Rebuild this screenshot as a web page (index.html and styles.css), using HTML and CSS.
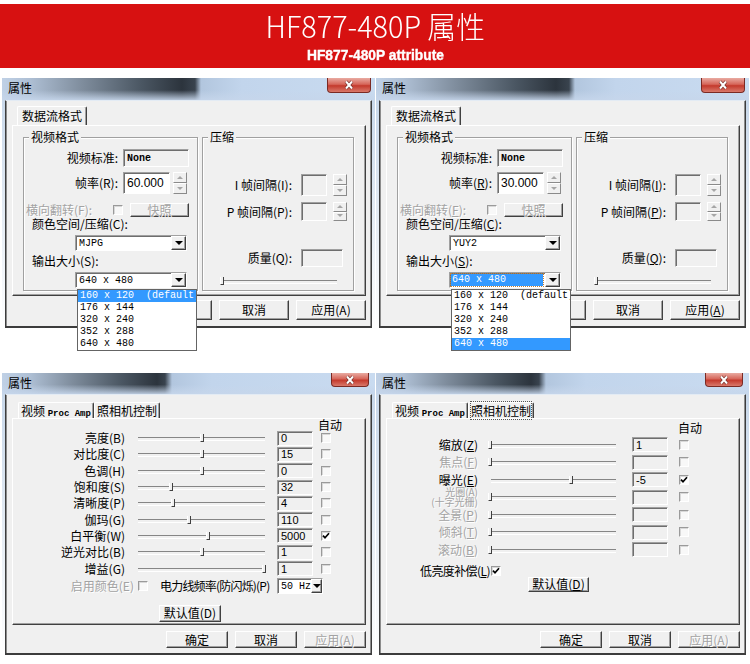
FILE: index.html
```html
<!DOCTYPE html>
<html lang="zh-CN">
<head>
  <meta charset="UTF-8">
  <meta name="viewport" content="width=device-width, initial-scale=1.0">
  <title>HF877-480P 属性</title>
  <link rel="stylesheet" href="styles.css">
</head>
<body>
  <header class="banner">
    <h1><span>HF877-480P 属性</span></h1>
    <p><span>HF877-480P attribute</span></p>
  </header>

  <main class="sheet">
    <!-- stream format, MJPG -->
    <section class="win">
      <div class="titlebar">
        <span class="caption">属性</span>
        <span class="close"><svg viewBox="0 0 12 10" width="12" height="10"><path d="M3 1.5l6 7M9 1.5l-6 7" stroke="#6a2520" stroke-width="3.4"/><path d="M3 1.5l6 7M9 1.5l-6 7" stroke="#fff" stroke-width="2"/></svg></span>
      </div>
      <div class="client">
        <div class="tabs"><span class="tab">数据流格式</span></div>
        <div class="panel stream">
          <fieldset class="group video">
            <legend>视频格式</legend>
            <div class="row v-std"><span class="lbl">视频标准:</span><span class="field mono w66">None</span></div>
            <div class="row v-rate"><span class="lbl">帧率(R):</span><span class="field edit sans w47">60.000</span><span class="spin"><i></i><i class="dn"></i></span></div>
            <div class="row v-flip"><span class="lbl off">横向翻转(F):</span><span class="chk"></span><span class="btn off snap">快照</span></div>
            <div class="row v-note">颜色空间/压缩(C):</div>
            <div class="row v-box"><span class="combo"><span class="val">MJPG</span><span class="arrow"></span></span></div>
            <div class="row v-note">输出大小(S):</div>
            <div class="row v-box">
              <span class="combo"><span class="val">640 x 480</span><span class="arrow"></span>
                <ul class="list">
                  <li class="sel">160 x 120  (default)</li>
                  <li>176 x 144</li>
                  <li>320 x 240</li>
                  <li>352 x 288</li>
                  <li>640 x 480</li>
                </ul>
              </span>
            </div>
          </fieldset>
          <fieldset class="group comp">
            <legend>压缩</legend>
            <div class="row c-i"><span class="lbl">I 帧间隔(I):</span><span class="field w26"></span><span class="spin"><i></i><i class="dn"></i></span></div>
            <div class="row c-p"><span class="lbl">P 帧间隔(P):</span><span class="field w26"></span><span class="spin"><i></i><i class="dn"></i></span></div>
            <div class="row c-q"><span class="lbl">质量(Q):</span><span class="field w42"></span></div>
            <div class="row c-s"><span class="slider"><span class="thumb" style="left:0%"></span></span></div>
          </fieldset>
        </div>
        <div class="buttons">
          <span class="btn">确定</span><span class="btn">取消</span><span class="btn">应用(A)</span>
        </div>
      </div>
    </section>

    <!-- stream format, YUY2 -->
    <section class="win">
      <div class="titlebar">
        <span class="caption">属性</span>
        <span class="close"><svg viewBox="0 0 12 10" width="12" height="10"><path d="M3 1.5l6 7M9 1.5l-6 7" stroke="#6a2520" stroke-width="3.4"/><path d="M3 1.5l6 7M9 1.5l-6 7" stroke="#fff" stroke-width="2"/></svg></span>
      </div>
      <div class="client">
        <div class="tabs"><span class="tab">数据流格式</span></div>
        <div class="panel stream">
          <fieldset class="group video">
            <legend>视频格式</legend>
            <div class="row v-std"><span class="lbl">视频标准:</span><span class="field mono w66">None</span></div>
            <div class="row v-rate"><span class="lbl">帧率(<u>R</u>):</span><span class="field edit sans w47">30.000</span><span class="spin"><i></i><i class="dn"></i></span></div>
            <div class="row v-flip"><span class="lbl off">横向翻转(<u>F</u>):</span><span class="chk"></span><span class="btn off snap">快照</span></div>
            <div class="row v-note">颜色空间/压缩(<u>C</u>):</div>
            <div class="row v-box"><span class="combo"><span class="val">YUY2</span><span class="arrow"></span></span></div>
            <div class="row v-note">输出大小(<u>S</u>):</div>
            <div class="row v-box">
              <span class="combo"><span class="val hl">640 x 480</span><span class="arrow"></span>
                <ul class="list">
                  <li>160 x 120  (default)</li>
                  <li>176 x 144</li>
                  <li>320 x 240</li>
                  <li>352 x 288</li>
                  <li class="sel">640 x 480</li>
                </ul>
              </span>
            </div>
          </fieldset>
          <fieldset class="group comp">
            <legend>压缩</legend>
            <div class="row c-i"><span class="lbl">I 帧间隔(<u>I</u>):</span><span class="field w26"></span><span class="spin"><i></i><i class="dn"></i></span></div>
            <div class="row c-p"><span class="lbl">P 帧间隔(<u>P</u>):</span><span class="field w26"></span><span class="spin"><i></i><i class="dn"></i></span></div>
            <div class="row c-q"><span class="lbl">质量(<u>Q</u>):</span><span class="field w42"></span></div>
            <div class="row c-s"><span class="slider"><span class="thumb" style="left:0%"></span></span></div>
          </fieldset>
        </div>
        <div class="buttons">
          <span class="btn">确定</span><span class="btn">取消</span><span class="btn">应用(<u>A</u>)</span>
        </div>
      </div>
    </section>

    <!-- video proc amp -->
    <section class="win tall">
      <div class="titlebar">
        <span class="caption">属性</span>
        <span class="close"><svg viewBox="0 0 12 10" width="12" height="10"><path d="M3 1.5l6 7M9 1.5l-6 7" stroke="#6a2520" stroke-width="3.4"/><path d="M3 1.5l6 7M9 1.5l-6 7" stroke="#fff" stroke-width="2"/></svg></span>
      </div>
      <div class="client">
        <div class="tabs"><span class="tab">视频 <b>Proc Amp</b></span><span class="tab">照相机控制</span></div>
        <div class="panel amp">
          <div class="auto">自动</div>
          <div class="row ctl"><span class="lbl">亮度(B)</span><span class="slider"><span class="thumb" style="left:51%"></span></span><span class="field">0</span><span class="chk"></span></div>
          <div class="row ctl"><span class="lbl">对比度(C)</span><span class="slider"><span class="thumb" style="left:51%"></span></span><span class="field">15</span><span class="chk"></span></div>
          <div class="row ctl"><span class="lbl">色调(H)</span><span class="slider"><span class="thumb" style="left:51%"></span></span><span class="field">0</span><span class="chk"></span></div>
          <div class="row ctl"><span class="lbl">饱和度(S)</span><span class="slider"><span class="thumb" style="left:27%"></span></span><span class="field">32</span><span class="chk"></span></div>
          <div class="row ctl"><span class="lbl">清晰度(P)</span><span class="slider"><span class="thumb" style="left:28%"></span></span><span class="field">4</span><span class="chk"></span></div>
          <div class="row ctl"><span class="lbl">伽玛(G)</span><span class="slider"><span class="thumb" style="left:41%"></span></span><span class="field">110</span><span class="chk"></span></div>
          <div class="row ctl"><span class="lbl">白平衡(W)</span><span class="slider"><span class="thumb" style="left:56%"></span></span><span class="field">5000</span><span class="chk on"><svg viewBox="0 0 8 8" width="8" height="8"><path d="M1 3.6l2 2.2 4-4.6" stroke="#000" stroke-width="1.7" fill="none"/></svg></span></div>
          <div class="row ctl"><span class="lbl">逆光对比(B)</span><span class="slider"><span class="thumb" style="left:51%"></span></span><span class="field">1</span><span class="chk"></span></div>
          <div class="row ctl"><span class="lbl">增益(G)</span><span class="slider"><span class="thumb" style="left:100%"></span></span><span class="field">1</span><span class="chk"></span></div>
          <div class="row misc">
            <span class="lbl off">启用颜色(E)</span><span class="chk"></span>
            <span class="power">电力线频率(防闪烁)(P)</span>
            <span class="combo hz"><span class="val">50 Hz</span><span class="arrow"></span></span>
          </div>
          <span class="btn dflt">默认值(D)</span>
        </div>
        <div class="buttons">
          <span class="btn">确定</span><span class="btn">取消</span><span class="btn off">应用(A)</span>
        </div>
      </div>
    </section>

    <!-- camera control -->
    <section class="win tall">
      <div class="titlebar">
        <span class="caption">属性</span>
        <span class="close"><svg viewBox="0 0 12 10" width="12" height="10"><path d="M3 1.5l6 7M9 1.5l-6 7" stroke="#6a2520" stroke-width="3.4"/><path d="M3 1.5l6 7M9 1.5l-6 7" stroke="#fff" stroke-width="2"/></svg></span>
      </div>
      <div class="client">
        <div class="tabs"><span class="tab">视频 <b>Proc Amp</b></span><span class="tab on"><em>照相机控制</em></span></div>
        <div class="panel cam">
          <div class="auto">自动</div>
          <div class="row ctl"><span class="lbl">缩放(<u>Z</u>)</span><span class="slider"><span class="thumb" style="left:0%"></span></span><span class="field">1</span><span class="chk"></span></div>
          <div class="row ctl"><span class="lbl off">焦点(<u>F</u>)</span><span class="slider"><span class="thumb" style="left:0%"></span></span><span class="field"></span><span class="chk"></span></div>
          <div class="row ctl"><span class="lbl">曝光(<u>E</u>)</span><span class="slider"><span class="thumb" style="left:65%"></span></span><span class="field">-5</span><span class="chk on"><svg viewBox="0 0 8 8" width="8" height="8"><path d="M1 3.6l2 2.2 4-4.6" stroke="#000" stroke-width="1.7" fill="none"/></svg></span></div>
          <div class="row ctl"><span class="lbl off two"><span>光圈(A)</span><span>(十字光栅)</span></span><span class="slider"><span class="thumb" style="left:0%"></span></span><span class="field"></span><span class="chk"></span></div>
          <div class="row ctl"><span class="lbl off">全景(<u>P</u>)</span><span class="slider"><span class="thumb" style="left:0%"></span></span><span class="field"></span><span class="chk"></span></div>
          <div class="row ctl"><span class="lbl off">倾斜(<u>T</u>)</span><span class="slider"><span class="thumb" style="left:0%"></span></span><span class="field"></span><span class="chk"></span></div>
          <div class="row ctl"><span class="lbl off">滚动(<u>B</u>)</span><span class="slider"><span class="thumb" style="left:0%"></span></span><span class="field"></span><span class="chk"></span></div>
          <div class="row low"><span class="lbl">低亮度补偿(<u>L</u>)</span><span class="chk on"><svg viewBox="0 0 8 8" width="8" height="8"><path d="M1 3.6l2 2.2 4-4.6" stroke="#000" stroke-width="1.7" fill="none"/></svg></span></div>
          <span class="btn dflt">默认值(<u>D</u>)</span>
        </div>
        <div class="buttons">
          <span class="btn">确定</span><span class="btn">取消</span><span class="btn off">应用(A)</span>
        </div>
      </div>
    </section>
  </main>
</body>
</html>
```

FILE: styles.css
```css
* {
  box-sizing: border-box;
}

body {
  margin: 0;
  width: 750px;
  background: #fff;
  color: #000;
  font-family: "Noto Sans CJK SC", "Liberation Sans", sans-serif;
  font-size: 12px;
  line-height: 12px;
}

u {
  text-decoration-thickness: 1px;
  text-underline-offset: 1px;
}

/* red title band */
.banner {
  margin-top: 4px;
  height: 64px;
  padding-top: 4px;
  background: #d71111;
  color: #fff;
  text-align: center;
}

.banner h1 {
  margin: 0;
  font-size: 30px;
  font-weight: 300;
  line-height: 35px;
}

.banner span {
  display: inline-block;
  white-space: nowrap;
  transform: scaleX(0.96);
}

.banner p {
  margin: 4px 0 0;
  font: bold 15px/16px "Liberation Sans", sans-serif;
}

.banner p span {
  transform: scaleX(0.92);
  -webkit-text-stroke: 0.4px #fff;
}

/* the four dialogs */
.sheet {
  display: grid;
  grid-template-columns: 373px 373px;
  column-gap: 1px;
  row-gap: 43px;
  align-items: start;
  padding: 10px 0 0 2px;
}

.win {
  padding-bottom: 2px;
  background: linear-gradient(#c3d4e8, #dfe8f2 45%, #fff);
}

.titlebar {
  height: 22px;
  display: flex;
  justify-content: space-between;
  align-items: flex-start;
  padding: 0 4px 0 6px;
  background:
    linear-gradient(rgba(198, 214, 235, 0) 55%, rgba(198, 214, 235, 0.9)),
    linear-gradient(90deg, #c0d1e6 0, #aebfd4 28px, #7f8d9d 80px, #4a5662 140px, #2c343d 180px, #39434e 193px, #b2c6de 199px, #c2d5ec 240px, #c9dbf0 100%);
}

.caption {
  line-height: 20px;
}

.close {
  width: 44px;
  height: 15px;
  display: flex;
  align-items: center;
  justify-content: center;
  border: 1px solid #7b2a23;
  border-top: 0;
  border-radius: 0 0 4px 4px;
  background: linear-gradient(#e9aba2, #d6665a 45%, #c43a2d 55%, #d9786a);
}

.tall .titlebar {
  height: 21px;
  background:
    linear-gradient(rgba(198, 214, 235, 0) 55%, rgba(198, 214, 235, 0.9)),
    linear-gradient(90deg, #c0d1e6 0, #aebfd4 28px, #7f8d9d 70px, #4a5662 120px, #2c343d 155px, #39434e 163px, #b2c6de 170px, #c2d5ec 210px, #c9dbf0 100%);
}

.tall .close {
  width: 38px;
  height: 14px;
  margin-right: 2px;
}

.client {
  height: 228px;
  margin: 0 3px;
  display: flex;
  flex-direction: column;
  padding: 0 5px 6px 6px;
  background: #f0f0f0;
  border: 1px solid #3c3c3c;
  border-top-color: #e3ebf4;
  border-bottom-width: 2px;
  box-shadow: inset 1px 0 #8c8c8c, inset -1px 0 #8c8c8c;
}

.tall .client {
  height: 261px;
  padding-bottom: 5px;
}

/* tab strip */
.tabs {
  flex: none;
  display: flex;
  height: 19px;
  margin: 5px 0 0 5px;
}

.tall .tabs {
  height: 16px;
  margin-top: 7px;
  margin-left: 6px;
}

.tab {
  padding: 0 4px;
  line-height: 18px;
  white-space: nowrap;
  border: 1px solid #fff;
  border-bottom: 0;
  border-right-color: #404040;
  border-radius: 2px 2px 0 0;
  box-shadow: inset -1px 0 #a0a0a0;
}

.tall .tab {
  padding: 0 2px;
  line-height: 15px;
}

.tab b {
  font: bold 9px "Liberation Mono", monospace;
}

.tab em {
  font-style: normal;
  outline: 1px dotted #555;
  outline-offset: 0;
}

.panel {
  flex: none;
  position: relative;
  height: 171px;
  border: 1px solid #fff;
  border-right-color: #404040;
  border-bottom-color: #404040;
  box-shadow: inset -1px -1px #a0a0a0;
}

.tall .panel {
  height: 207px;
}

/* dialog buttons */
.buttons {
  flex: none;
  display: flex;
  justify-content: flex-end;
  gap: 7px;
  height: 20px;
  margin: 4px 0 0;
}

.tall .buttons {
  height: 17px;
  margin-top: 6px;
}

.btn {
  flex: none;
  width: 70px;
  display: flex;
  align-items: center;
  justify-content: center;
  white-space: nowrap;
  background: #f0f0f0;
  border: 1px solid;
  border-color: #fff #404040 #404040 #fff;
  box-shadow: inset -1px -1px #a0a0a0;
}

.tall .btn {
  width: 62px;
}

.off {
  color: #a3a3a3;
  text-shadow: 1px 1px #fff;
}

/* common controls */
.row {
  flex: none;
  display: flex;
  align-items: stretch;
  white-space: nowrap;
}

.lbl {
  flex: none;
  display: flex;
  align-items: center;
  justify-content: flex-end;
}

.field {
  flex: none;
  display: flex;
  align-items: center;
  overflow: hidden;
  padding-left: 3px;
  background: #f0f0f0;
  border: 1px solid;
  border-color: #a0a0a0 #fff #fff #a0a0a0;
  box-shadow: inset 1px 1px #6e6e6e;
  font: 11px "Liberation Sans", sans-serif;
}

.field.edit {
  background: #fff;
}

.field.sans {
  font-size: 12px;
}

.mono,
.combo .val,
.list li {
  font-family: "Liberation Mono", monospace;
  font-size: 10px;
}

.field.mono {
  font-weight: bold;
}

.w66 { width: 66px; }
.w47 { width: 47px; }
.w42 { width: 42px; }
.w26 { width: 26px; }

.spin {
  flex: none;
  width: 14px;
  display: flex;
  flex-direction: column;
  margin-left: 3px;
}

.spin i {
  flex: 1;
  position: relative;
  background: #f0f0f0;
  border: 1px solid;
  border-color: #fff #8a8a8a #8a8a8a #fff;
}

.spin i::after {
  content: "";
  position: absolute;
  left: 50%;
  top: 50%;
  margin: -2px 0 0 -3px;
  border: 3px solid transparent;
  border-top: 0;
  border-bottom: 3px solid #a6a6a6;
}

.spin i.dn::after {
  border-bottom: 0;
  border-top: 3px solid #a6a6a6;
}

.chk {
  flex: none;
  align-self: center;
  width: 10px;
  height: 10px;
  display: flex;
  align-items: center;
  justify-content: center;
  background: #f8f8f8;
  border: 1px solid;
  border-color: #9a9a9a #fff #fff #9a9a9a;
  box-shadow: inset 1px 1px #d8d8d8;
}

.chk.on {
  background: #fff;
}

.combo {
  flex: none;
  position: relative;
  display: flex;
  width: 112px;
  height: 16px;
  background: #fff;
  border: 1px solid;
  border-color: #a0a0a0 #fff #fff #a0a0a0;
  box-shadow: inset 1px 1px #6e6e6e;
}

.combo .val {
  flex: 1;
  padding: 1px 0 0 3px;
  line-height: 13px;
}

.combo .val.hl {
  margin: 1px 2px 1px 1px;
  padding: 0 0 0 1px;
  line-height: 12px;
  background: #3399ff;
  color: #fff;
  outline: 1px dotted #c0803a;
}

.combo .arrow {
  position: relative;
  width: 15px;
  background: #f0f0f0;
  border: 1px solid;
  border-color: #fff #404040 #404040 #fff;
  box-shadow: inset -1px -1px #a0a0a0;
}

.combo .arrow::after {
  content: "";
  position: absolute;
  left: 50%;
  top: 50%;
  margin: -2px 0 0 -4px;
  border: 4px solid transparent;
  border-bottom: 0;
  border-top: 4px solid #000;
}

/* open drop-down list of the size combo */
.list {
  position: absolute;
  top: calc(100% + 2px);
  left: 1px;
  z-index: 2;
  width: 120px;
  margin: 0;
  padding: 0;
  list-style: none;
  background: #fff;
  border: 1px solid #646464;
}

.list li {
  height: 12px;
  line-height: 12px;
  padding-left: 2px;
  white-space: pre;
  overflow: hidden;
}

.list li.sel {
  background: #3399ff;
  color: #fff;
}

.slider {
  flex: none;
  position: relative;
  align-self: center;
  height: 10px;
}

.slider::before {
  content: "";
  position: absolute;
  left: 0;
  right: 0;
  top: 4px;
  height: 2px;
  border-top: 1px solid #868686;
  border-bottom: 1px solid #fff;
}

.thumb {
  position: absolute;
  top: 1px;
  width: 4px;
  height: 8px;
  margin-left: -3px;
  background: #f0f0f0;
  border-left: 1px solid #fff;
  border-right: 1px solid #404040;
  border-bottom: 1px solid #404040;
}

/* stream format page */
.stream {
  display: flex;
  gap: 4px;
  padding: 4px 0 0 10px;
}

.group {
  flex: none;
  min-width: 0;
  height: 161px;
  margin: 0;
  padding: 0;
  display: flex;
  flex-direction: column;
  border: 1px solid #a0a0a0;
  box-shadow: inset 1px 1px #fff, 1px 1px #fff;
}

.group legend {
  margin-left: 5px;
  padding: 0 2px;
  line-height: 14px;
  background: #f0f0f0;
}

.video { width: 175px; }
.comp { width: 152px; }

.video .lbl {
  width: 94px;
  margin-right: 5px;
}

.v-std { margin-top: 5px; height: 18px; }
.v-rate { margin-top: 5px; height: 22px; }
.v-flip { margin-top: 9px; height: 14px; }
.v-note { margin-top: 1px; height: 12px; padding-left: 8px; align-items: center; }
.v-box { margin-top: 5px; height: 16px; padding-left: 51px; }
.v-box + .v-note { margin-top: 4px; }

.v-flip .lbl {
  width: 89px;
  margin: 0;
  padding-left: 2px;
  justify-content: flex-start;
}

.v-flip .snap {
  width: 59px;
  margin-left: 7px;
}

.comp .lbl {
  width: 89px;
  margin-right: 9px;
}

.comp .spin {
  margin-left: 6px;
}

.c-i { margin-top: 30px; height: 22px; }
.c-p { margin-top: 6px; height: 19px; }
.c-q { margin-top: 28px; height: 18px; }
.c-s { margin-top: 9px; height: 9px; padding-left: 20px; }
.c-s .slider { width: 114px; }

/* proc amp page */
.amp .auto {
  height: 11px;
  padding-left: 305px;
  line-height: 12px;
}

.amp .ctl { height: 16.3px; }
.amp .ctl .lbl { width: 112px; }
.amp .ctl .slider { width: 127px; margin-left: 13px; }
.amp .ctl .field { width: 36px; height: 15px; align-self: center; margin-left: 12px; }
.amp .ctl .chk { margin-left: 8px; }

.misc {
  margin-top: 1.3px;
  height: 16px;
}

.misc .lbl { width: 121px; }
.misc .chk { margin-left: 4px; }

.power {
  width: 105px;
  margin-left: 12px;
  display: flex;
  align-items: center;
  letter-spacing: -0.8px;
}

.combo.hz {
  width: 46px;
  margin-left: 12px;
}

.combo.hz .arrow {
  width: 14px;
}

.amp .dflt {
  width: 62px;
  height: 17px;
  margin: 11px 0 0 146px;
}

/* camera control page */
.cam .auto {
  height: 17px;
  padding-left: 291px;
  line-height: 18px;
}

.cam .ctl { height: 17.5px; }
.cam .ctl .lbl { width: 91px; }
.cam .ctl .slider { width: 125px; margin-left: 13px; }
.cam .ctl .field { width: 36px; height: 15px; align-self: center; margin-left: 16px; }
.cam .ctl .chk { margin-left: 11px; }

.cam .two {
  flex-direction: column;
  align-items: flex-end;
  justify-content: center;
  font-size: 10px;
  line-height: 10px;
}

.low {
  margin-top: 6.25px;
  height: 12px;
  padding-left: 33px;
}

.low .lbl {
  width: 71px;
  justify-content: flex-start;
  letter-spacing: -0.6px;
}

.cam .dflt {
  width: 61px;
  height: 15px;
  margin-left: 141px;
}
```
